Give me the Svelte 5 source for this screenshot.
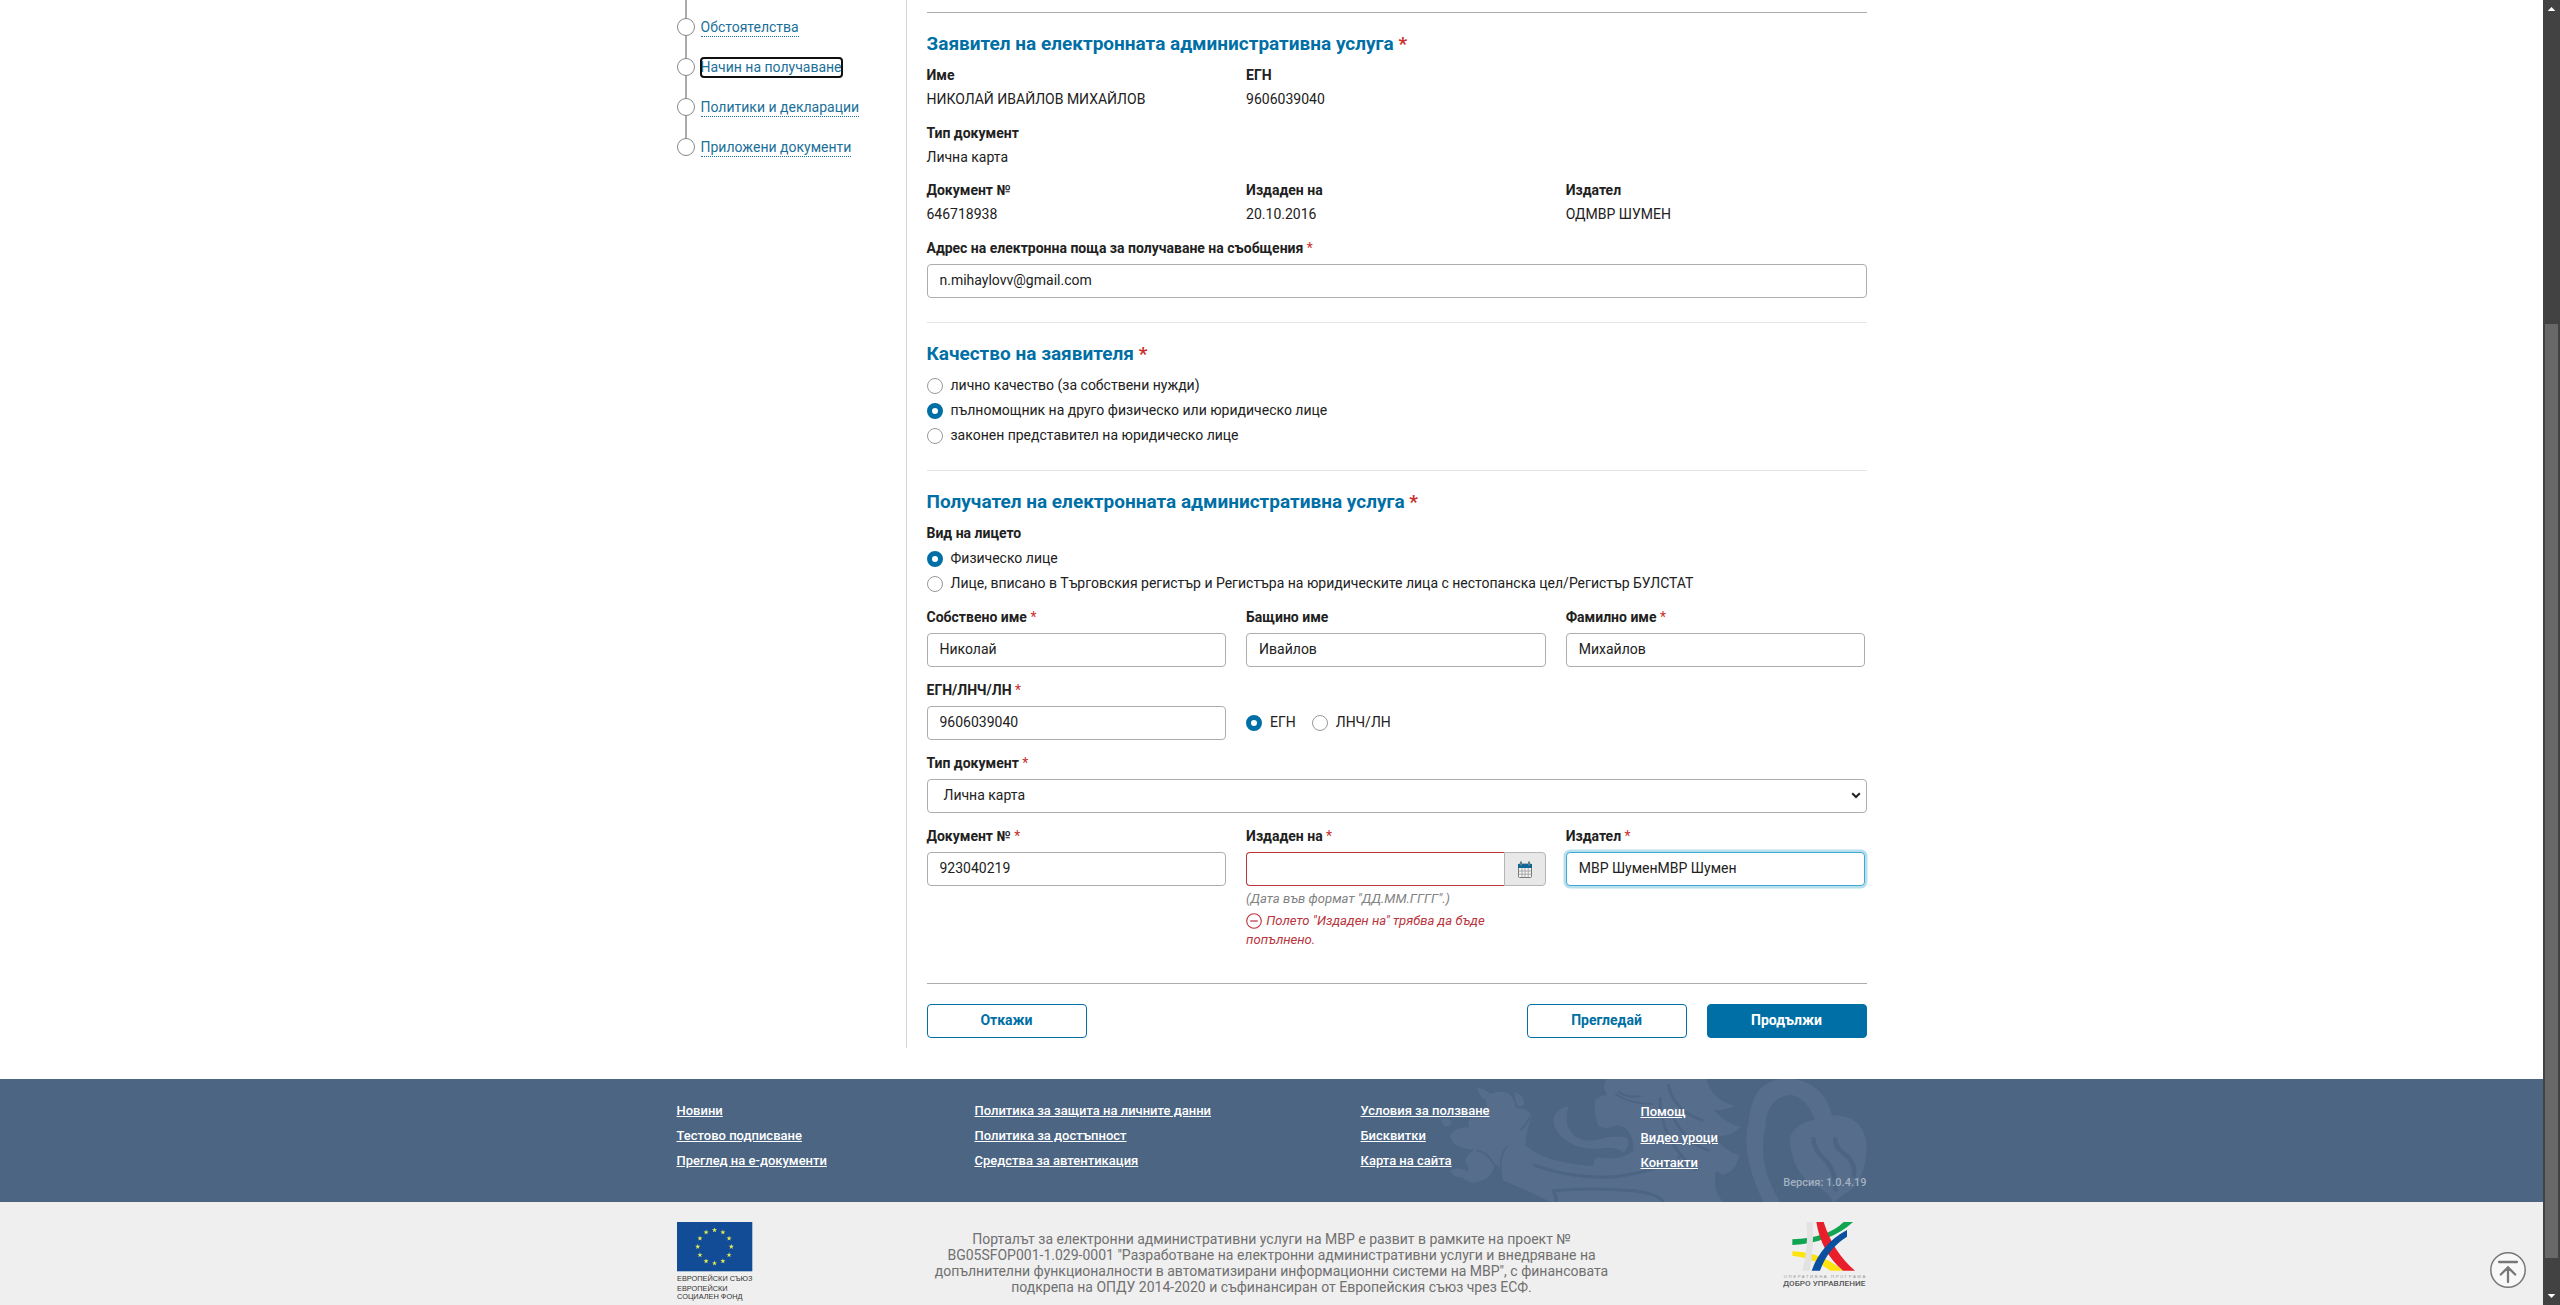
<script>
  const steps = [
    { label: 'Обстоятелства' },
    { label: 'Начин на получаване', focused: true },
    { label: 'Политики и декларации' },
    { label: 'Приложени документи' }
  ];

  const applicant = [
    [{ label: 'Име', value: 'НИКОЛАЙ ИВАЙЛОВ МИХАЙЛОВ' }, { label: 'ЕГН', value: '9606039040' }],
    [{ label: 'Тип документ', value: 'Лична карта' }],
    [
      { label: 'Документ №', value: '646718938' },
      { label: 'Издаден на', value: '20.10.2016' },
      { label: 'Издател', value: 'ОДМВР ШУМЕН' }
    ]
  ];

  const capacities = [
    { label: 'лично качество (за собствени нужди)', checked: false },
    { label: 'пълномощник на друго физическо или юридическо лице', checked: true },
    { label: 'законен представител на юридическо лице', checked: false }
  ];

  const personKinds = [
    { label: 'Физическо лице', checked: true },
    {
      label: 'Лице, вписано в Търговския регистър и Регистъра на юридическите лица с нестопанска цел/Регистър БУЛСТАТ',
      checked: false
    }
  ];

  const idKinds = [
    { label: 'ЕГН', checked: true },
    { label: 'ЛНЧ/ЛН', checked: false }
  ];

  const footerColumns = [
    ['Новини', 'Тестово подписване', 'Преглед на е-документи'],
    ['Политика за защита на личните данни', 'Политика за достъпност', 'Средства за автентикация'],
    ['Условия за ползване', 'Бисквитки', 'Карта на сайта'],
    ['Помощ', 'Видео уроци', 'Контакти']
  ];

  const starPoints = Array.from({ length: 10 }, (_, i) => {
    const r = i % 2 ? 1.05 : 2.7;
    const a = (i * Math.PI) / 5;
    return `${(r * Math.sin(a)).toFixed(2)},${(-r * Math.cos(a)).toFixed(2)}`;
  }).join(' ');

  const stars = Array.from({ length: 12 }, (_, i) => {
    const a = (i * Math.PI) / 6;
    return { x: 37.5 + 16.8 * Math.sin(a), y: 24.7 - 16.6 * Math.cos(a) };
  });
</script>

{#snippet title(text)}
  <h2>{text} <span class="req">*</span></h2>
{/snippet}

{#snippet caption(text, required)}
  <span class="label">{text}{#if required}{' '}<span class="req">*</span>{/if}</span>
{/snippet}

{#snippet radio(option)}
  <span class="radio">
    <span class="dot" class:checked={option.checked}></span>
    <span>{option.label}</span>
  </span>
{/snippet}

{#snippet field(text, required, value, focused = false)}
  <div class="field">
    {@render caption(text, required)}
    <input class="control" class:focused type="text" {value} />
  </div>
{/snippet}

<div class="window">
  <div class="page">
    <div class="content">
      <nav class="steps">
        {#each steps as step}
          <div class="step">
            <span class="bullet"></span>
            <a class:focused={step.focused}>{step.label}</a>
          </div>
        {/each}
      </nav>

      <main>
        <hr class="strong" />
        <section class="applicant">
          {@render title('Заявител на електронната административна услуга')}
          {#each applicant as row}
            <div class="row facts">
              {#each row as item}
                <div class="fact">
                  {@render caption(item.label, false)}
                  <span class="value">{item.value}</span>
                </div>
              {/each}
            </div>
          {/each}
          {@render field('Адрес на електронна поща за получаване на съобщения', true, 'n.mihaylovv@gmail.com')}
        </section>

        <hr />
        <section class="capacity">
          {@render title('Качество на заявителя')}
          <div class="radios">
            {#each capacities as option}{@render radio(option)}{/each}
          </div>
        </section>

        <hr />
        <section class="recipient">
          {@render title('Получател на електронната административна услуга')}
          <div class="kind">
            {@render caption('Вид на лицето', false)}
            <div class="radios">
              {#each personKinds as option}{@render radio(option)}{/each}
            </div>
          </div>
          <div class="row">
            {@render field('Собствено име', true, 'Николай')}
            {@render field('Бащино име', false, 'Ивайлов')}
            {@render field('Фамилно име', true, 'Михайлов')}
          </div>
          <div class="row">
            {@render field('ЕГН/ЛНЧ/ЛН', true, '9606039040')}
            <div class="inline-radios">
              {#each idKinds as option}{@render radio(option)}{/each}
            </div>
          </div>
          <div class="field">
            {@render caption('Тип документ', true)}
            <div class="control select">
              <span>Лична карта</span>
              <svg width="10" height="7" viewBox="0 0 10 7">
                <path d="M1.2 1.2 L5 5 L8.8 1.2" fill="none" stroke="#222" stroke-width="2" />
              </svg>
            </div>
          </div>
          <div class="row">
            {@render field('Документ №', true, '923040219')}
            <div class="field">
              {@render caption('Издаден на', true)}
              <div class="date">
                <input class="control invalid" type="text" value="" />
                <span class="addon">
                  <svg width="14" height="17" viewBox="0 0 14 17">
                    <rect x="0.5" y="3" width="13" height="13.5" rx="1" fill="#f4f4f4" stroke="#777" />
                    <path d="M0 3 h14 v4 H0z" fill="#0f6796" />
                    <path d="M3 0.5 v4 M11 0.5 v4" stroke="#5f7d90" stroke-width="2" />
                    <path d="M0.5 10 h13 M0.5 13.2 h13 M4 7 v9.5 M7 7 v9.5 M10.2 7 v9.5" stroke="#999" fill="none" stroke-width="0.8" />
                  </svg>
                </span>
              </div>
              <span class="hint">(Дата във формат "ДД.ММ.ГГГГ".)</span>
              <span class="error">
                <svg width="16" height="16" viewBox="0 0 16 16">
                  <circle cx="8" cy="8" r="7.3" fill="none" stroke="#b9343c" stroke-width="1.1" />
                  <path d="M4.2 8 h7.6" stroke="#b9343c" stroke-width="1.2" />
                </svg>
                Полето "Издаден на" трябва да бъде попълнено.
              </span>
            </div>
            {@render field('Издател', true, 'МВР ШуменМВР Шумен', true)}
          </div>
        </section>

        <hr class="strong" />
        <div class="actions">
          <button>Откажи</button>
          <span class="grow"></span>
          <button>Прегледай</button>
          <button class="primary">Продължи</button>
        </div>
      </main>
    </div>

    <div class="links">
      <div class="container">
        <svg class="lion" width="460" height="123" viewBox="0 15 1380 369">
          <g fill="#566d8c">
            <path d="M170 42 q35 2 48 28 q-15 12 -32 2 q-8 -12 -16 -30z" />
            <path d="M283 54 q34 10 28 40 q-14 10 -22 -4 q-4 -18 -6 -36z" />
            <path d="M62 134 q26 -6 34 10 q-6 16 -20 14 q-10 -10 -14 -24z" />
            <path d="M90 290 q24 -14 54 2 q-4 20 -30 18 q-18 -6 -24 -20z" />
            <path d="M196 70 Q222 46 262 56 Q288 76 286 102 Q330 100 334 130 Q314 190 318 216 Q360 250 420 262 Q500 282 590 274 Q700 262 760 240 L900 384 L390 384 Q330 352 246 318 Q246 280 222 268 Q222 318 160 326 Q120 318 126 302 Q160 290 134 262 Q142 240 162 228 Q96 222 90 186 Q104 158 148 160 Q138 128 170 130 Q210 140 196 70z" />
            <path d="M524 92 Q520 70 560 62 Q544 36 560 15 L858 15 Q880 80 944 96 Q910 112 880 108 Q920 150 962 158 Q930 194 880 184 Q910 230 958 244 Q944 300 906 302 L888 290 Q876 350 910 384 L760 384 Q730 300 790 240 Q700 300 520 276 Q520 250 536 250 Q600 262 640 230 Q640 160 590 154 Q560 170 536 156 Q524 130 524 92z" />
            <path d="M446 96 Q392 108 402 156 Q440 230 540 224 Q590 214 610 236 Q634 214 622 192 Q580 182 540 196 Q470 212 444 160 Q436 124 446 96z" />
            <path d="M1030 384 Q960 240 986 140 Q996 30 1076 15 L1124 15 Q1212 30 1236 124 Q1330 122 1340 210 Q1340 330 1272 360 Q1246 384 1238 384 Q1228 352 1160 320 Q1110 270 1110 190 Q1124 150 1184 136 Q1160 70 1110 62 Q1040 70 1036 160 Q1010 270 1080 384z" />
          </g>
          <g fill="none" stroke="#4b6583" stroke-width="9">
            <path d="M594 52 Q620 74 662 66 M586 60 Q630 90 700 90" stroke-width="6" />
            <path d="M246 318 Q232 250 262 216 M300 170 Q320 150 330 128 M170 230 Q200 232 222 270" stroke-width="5" />
            <path d="M744 30 Q760 110 850 140 M760 130 Q800 210 870 230 M720 70 Q720 200 830 290" stroke-width="8" />
            <path d="M340 272 Q440 310 560 310 Q680 300 760 262 M398 350 Q520 340 640 350 Q720 360 730 384" />
            <path d="M400 352 Q410 366 408 384" />
            <path d="M1180 190 Q1180 230 1220 262 Q1250 300 1246 352 M1246 190 Q1240 220 1284 248 Q1310 280 1300 310" stroke-width="13" />
          </g>
        </svg>
        {#each footerColumns as column}
          <div class="column">
            {#each column as link}<a>{link}</a>{/each}
          </div>
        {/each}
        <span class="version">Версия: 1.0.4.19</span>
      </div>
    </div>

    <footer>
      <div class="container">
        <svg class="eu" width="78" height="80" viewBox="0 0 78 80">
          <rect width="75.3" height="49.3" fill="#134c96" />
          {#each stars as star}
            <polygon points={starPoints} transform="translate({star.x} {star.y})" fill="#e6ec52" />
          {/each}
          <g class="eu-text" fill="#333">
            <text x="0" y="58.6" textLength="75.5" lengthAdjust="spacingAndGlyphs">ЕВРОПЕЙСКИ СЪЮЗ</text>
            <text x="0" y="68.6" textLength="50.5" lengthAdjust="spacingAndGlyphs">ЕВРОПЕЙСКИ</text>
            <text x="0" y="77" textLength="65.5" lengthAdjust="spacingAndGlyphs">СОЦИАЛЕН ФОНД</text>
          </g>
        </svg>
        <p>
          Порталът за електронни административни услуги на МВР е развит в рамките на проект №<br />
          BG05SFOP001-1.029-0001 "Разработване на електронни административни услуги и внедряване на<br />
          допълнителни функционалности в автоматизирани информационни системи на МВР", с финансовата<br />
          подкрепа на ОПДУ 2014-2020 и съфинансиран от Европейския съюз чрез ЕСФ.
        </p>
        <svg class="opdu" width="84" height="68" viewBox="26 30 252 204">
          <path d="M54 82 Q160 78 208 30 L236 30 Q170 92 54 99z" fill="#0fa551" />
          <path d="M54 118 Q140 120 206 176 L168 176 Q120 138 54 131z" fill="#ffe30e" />
          <path d="M96 30 L115 30 Q120 100 106 176 L84 176 Q104 100 96 30z" fill="#e2e2e3" />
          <path d="M126 30 L148 30 Q176 120 242 176 L206 176 Q140 120 126 30z" fill="#e81f2a" />
          <path d="M218 54 L218 74 Q160 110 137 176 L112 176 Q140 96 218 54z" fill="#0b50a0" />
          <text class="op-small" x="28" y="199" textLength="245">ОПЕРАТИВНА ПРОГРАМА</text>
          <text class="op-name" x="26" y="221" textLength="247" lengthAdjust="spacingAndGlyphs">ДОБРО УПРАВЛЕНИЕ</text>
        </svg>
      </div>
    </footer>

    <button class="to-top" aria-label="Нагоре">
      <svg width="36" height="36" viewBox="0 0 36 36">
        <circle cx="18" cy="18" r="17.2" fill="#f8f8f8" stroke="#777" stroke-width="1.5" />
        <path d="M9 10 h18 M18 30 V16 M10.8 22.5 L18 15.4 L25.2 22.5" fill="none" stroke="#777" stroke-width="2.3" stroke-linecap="round" />
      </svg>
    </button>
  </div>

  <div class="scrollbar">
    <svg width="17" height="17" viewBox="0 0 17 17"><path d="M8.5 7 L12.3 11 H4.7z" fill="#fff" /></svg>
    <span class="thumb"></span>
    <svg width="17" height="17" viewBox="0 0 17 17"><path d="M8.5 10 L12.3 6 H4.7z" fill="#fff" /></svg>
  </div>
</div>

<style>
  :global(body) {
    background: #fff;
    overflow: hidden;
  }
  .window {
    display: flex;
    width: 2560px;
    height: 1305px;
    overflow: hidden;
    font: 14px/21px Roboto, sans-serif;
    color: #212121;
  }
  .window * {
    box-sizing: border-box;
  }
  .page {
    position: relative;
    flex: 1;
    display: flex;
    flex-direction: column;
  }
  .content,
  .container {
    width: 1190px;
    margin: 0 auto;
  }
  .content {
    display: flex;
    height: 1048px;
    margin-bottom: 31px;
  }

  /* Side navigation */
  .steps {
    width: 230px;
    padding-top: 7px;
    border-right: 1px solid #d6d6d6;
    background: linear-gradient(#aaa, #aaa) 8.5px 0 / 2px 140px no-repeat;
  }
  .step {
    display: flex;
    align-items: center;
    gap: 6px;
    height: 40px;
  }
  .bullet {
    width: 18px;
    height: 18px;
    border: 1.5px solid #888;
    border-radius: 50%;
    background: #fff;
  }
  .step a {
    line-height: 18px;
    color: #1a7099;
    border-bottom: 1px dotted #1a7099;
  }
  .step a.focused {
    border-bottom-color: transparent;
    outline: 2px solid #101010;
    outline-offset: -1px;
    border-radius: 3px;
  }

  /* Form */
  main {
    width: 940px;
    margin-left: 20px;
    padding-top: 12px;
  }
  hr {
    height: 1px;
    margin: 0;
    border: 0;
    background: #e4e4e4;
  }
  hr.strong {
    background: #adadad;
  }
  h2 {
    margin: 0;
    padding-top: 17px;
    font-size: 19px;
    line-height: 27px;
    font-weight: 700;
    color: #006fa5;
    white-space: nowrap;
  }
  .req {
    font-weight: 400;
    color: #c9302c;
  }
  h2 .req {
    font-weight: 700;
  }
  .applicant {
    height: 309px;
  }
  .capacity {
    height: 147px;
  }
  .recipient {
    height: 512px;
  }
  .row {
    display: grid;
    grid-template-columns: repeat(3, 299.6px);
    column-gap: 20px;
  }
  .label {
    display: block;
    font-weight: 700;
  }
  .facts {
    height: 57.67px;
  }
  h2 + .facts {
    margin-top: 8px;
  }
  .value {
    display: block;
    margin-top: 3px;
  }
  .field {
    height: 73px;
  }
  .control {
    display: block;
    width: 100%;
    height: 34px;
    margin: 5px 0 0;
    padding: 0 12px 2px;
    border: 1px solid #adadad;
    border-radius: 4px;
    background: #fff;
    font: inherit;
    color: inherit;
    outline: none;
  }
  .applicant .control {
    padding-bottom: 1px;
  }
  .control.focused {
    border-color: #3fa9d4;
    box-shadow: 0 0 0 2.5px #b8dfee;
  }
  .select {
    display: flex;
    align-items: center;
    justify-content: space-between;
    padding: 0 5px 2px 16px;
  }
  .date {
    display: flex;
    margin-top: 5px;
  }
  .control.invalid {
    width: 258px;
    margin: 0;
    border-color: #b9343c;
    border-right: 0;
    border-radius: 4px 0 0 4px;
  }
  .addon {
    display: flex;
    align-items: center;
    justify-content: center;
    width: 41.6px;
    height: 34px;
    border: 1px solid #b5b5b5;
    border-radius: 0 4px 4px 0;
    background: #e8e8e8;
  }
  .hint,
  .error {
    display: block;
    font-size: 13.1px;
    line-height: 19px;
    font-style: italic;
  }
  .hint {
    margin-top: 3px;
    color: #828282;
  }
  .error {
    width: 260px;
    margin-top: 3px;
    color: #b9343c;
  }
  .error svg {
    vertical-align: -4px;
    margin-right: 1px;
  }
  .radios {
    padding-top: 6px;
  }
  .radio {
    display: flex;
    align-items: center;
    gap: 8px;
    height: 25px;
    white-space: nowrap;
  }
  .dot {
    width: 16px;
    height: 16px;
    margin-top: 1px;
    border: 1px solid #999;
    border-radius: 50%;
    background: #fff;
  }
  .dot.checked {
    border: 5px solid #006fa5;
  }
  .kind {
    height: 92px;
    padding-top: 8px;
  }
  .kind .radios {
    padding-top: 2px;
  }
  .inline-radios {
    display: flex;
    gap: 16px;
    padding-top: 30px;
  }
  .actions {
    display: flex;
    gap: 20px;
    padding-top: 20px;
  }
  .grow {
    flex: 1;
  }
  .actions button {
    width: 160px;
    height: 34px;
    padding: 0 0 2px;
    border: 1px solid #006fa5;
    border-radius: 4px;
    background: #fff;
    font: 700 14px Roboto, sans-serif;
    color: #006fa5;
  }
  .actions .primary {
    background: #006fa5;
    color: #fff;
  }

  /* Link band */
  .links {
    height: 123px;
    background: #4b6583;
  }
  .links .container {
    position: relative;
    display: grid;
    grid-template-columns: 298px 386px 280px 226px;
    height: 123px;
    padding-top: 19px;
  }
  .lion {
    position: absolute;
    top: 0;
    right: -13px;
  }
  .column {
    position: relative;
    display: flex;
    flex-direction: column;
    align-items: flex-start;
    font-size: 13px;
    line-height: 25px;
    font-weight: 500;
    color: #fff;
  }
  .column a {
    text-decoration: underline;
  }
  .column:nth-of-type(4) {
    padding-top: 1px;
    line-height: 25.5px;
  }
  .version {
    position: absolute;
    right: 0;
    bottom: 10px;
    font-size: 11px;
    line-height: 18px;
    font-weight: 500;
    color: #a5b2c1;
  }

  /* Funding band */
  footer {
    flex: 1;
    background: #efefef;
  }
  footer .container {
    display: flex;
    justify-content: space-between;
    padding-top: 20px;
  }
  footer p {
    margin: 9px 0 0 6px;
    font-size: 14px;
    line-height: 16px;
    text-align: center;
    color: #707070;
    white-space: nowrap;
  }
  .eu-text {
    font: 7.6px "Liberation Sans", sans-serif;
  }
  .op-small {
    font: 13px "Liberation Sans", sans-serif;
    fill: #999;
  }
  .op-name {
    font: 500 22px Roboto, sans-serif;
    fill: #555;
  }
  .to-top {
    position: absolute;
    right: 17px;
    bottom: 17px;
    width: 36px;
    height: 36px;
    padding: 0;
    border: 0;
    background: none;
  }

  /* Scrollbar */
  .scrollbar {
    display: flex;
    flex-direction: column;
    width: 17px;
    background: #424242;
  }
  .thumb {
    width: 13px;
    height: 934px;
    margin: 307px 2px 30px;
    background: #686868;
  }
</style>
